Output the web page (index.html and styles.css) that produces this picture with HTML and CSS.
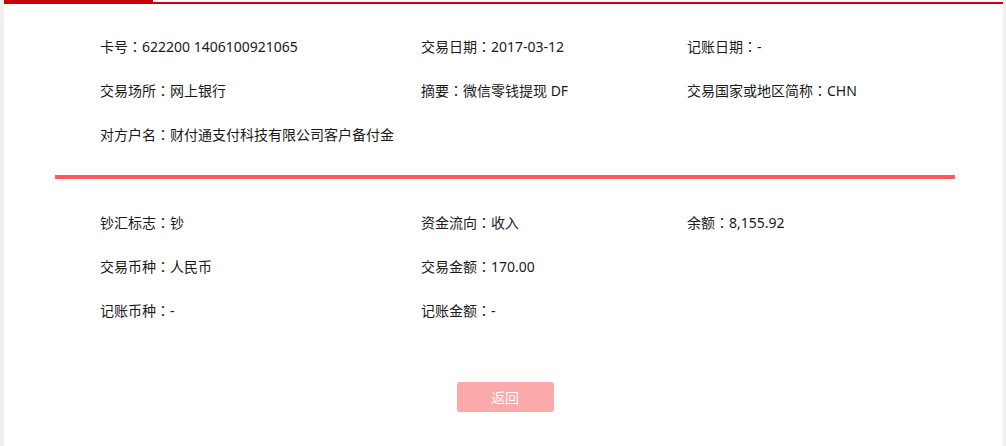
FILE: index.html
```html
<!DOCTYPE html>
<html lang="zh-CN">
<head>
<meta charset="utf-8">
<title>交易详情</title>
<link rel="stylesheet" href="styles.css">
</head>
<body>
<div class="panel">
  <div class="tabbar">
    <div class="tab"></div>
    <div class="tabline"></div>
  </div>
  <div class="content">
    <div class="grid">
      <div class="cell">卡号<span class="colon" lang="zh-TW">：</span>622200 1406100921065</div>
      <div class="cell">交易日期<span class="colon" lang="zh-TW">：</span>2017-03-12</div>
      <div class="cell">记账日期<span class="colon" lang="zh-TW">：</span>-</div>
      <div class="cell">交易场所<span class="colon" lang="zh-TW">：</span>网上银行</div>
      <div class="cell">摘要<span class="colon" lang="zh-TW">：</span>微信零钱提现 DF</div>
      <div class="cell">交易国家或地区简称<span class="colon" lang="zh-TW">：</span>CHN</div>
      <div class="cell">对方户名<span class="colon" lang="zh-TW">：</span>财付通支付科技有限公司客户备付金</div>
    </div>
    <div class="divider"></div>
    <div class="grid second">
      <div class="cell">钞汇标志<span class="colon" lang="zh-TW">：</span>钞</div>
      <div class="cell">资金流向<span class="colon" lang="zh-TW">：</span>收入</div>
      <div class="cell">余额<span class="colon" lang="zh-TW">：</span>8,155.92</div>
      <div class="cell">交易币种<span class="colon" lang="zh-TW">：</span>人民币</div>
      <div class="cell">交易金额<span class="colon" lang="zh-TW">：</span>170.00</div>
      <div class="cell"></div>
      <div class="cell">记账币种<span class="colon" lang="zh-TW">：</span>-</div>
      <div class="cell">记账金额<span class="colon" lang="zh-TW">：</span>-</div>
    </div>
    <div class="actions">
      <button class="btn" type="button">返回</button>
    </div>
  </div>
</div>
</body>
</html>
```
FILE: styles.css
```css
html, body {
  margin: 0;
  padding: 0;
  height: 100%;
}
body {
  background: #f0f0f0;
  font-family: "Noto Sans", "Noto Sans CJK SC", sans-serif;
  font-size: 14px;
  color: #1a1a1a;
}
.panel {
  margin: 0 3px 0 4px;
  background: #fff;
  min-height: 100%;
}
.tabbar {
  display: flex;
  align-items: flex-end;
  height: 4px;
}
.tab {
  width: 149px;
  height: 4px;
  background: #c9000b;
}
.tabline {
  flex: 1;
  height: 2px;
  background: #c9000b;
}
.content {
  width: 900px;
  margin-left: 51px;
  padding-top: 20px;
}
.grid {
  display: grid;
  grid-template-columns: 321px 266px 1fr;
  padding-left: 45px;
}
.cell {
  line-height: 44px;
  height: 44px;
  white-space: nowrap;
}
.colon {
  font-family: "Noto Sans CJK TC", sans-serif;
}
.divider {
  height: 4px;
  background: #ff5a5f;
  margin-top: 19px;
}
.second {
  margin-top: 21px;
}
.actions {
  display: flex;
  justify-content: center;
  margin-top: 50px;
}
.btn {
  width: 97px;
  height: 30px;
  border: none;
  border-radius: 3px;
  background: #fca9ab;
  color: #fff;
  font-family: "Noto Sans CJK SC", sans-serif;
  font-size: 14px;
  padding: 0;
}
```
